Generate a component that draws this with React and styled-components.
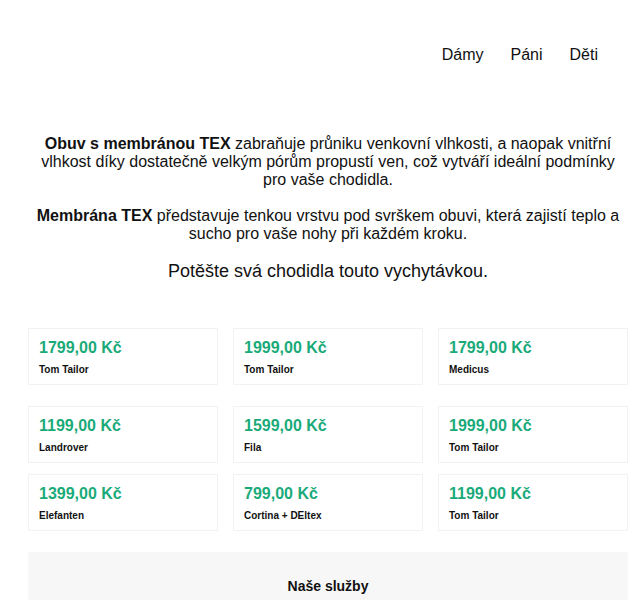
import React from 'react';
import styled, { createGlobalStyle } from 'styled-components';

const GlobalStyle = createGlobalStyle`
  body {
    margin: 0;
    background: #ffffff;
    font-family: "Liberation Sans", Arial, sans-serif;
    color: #111111;
  }
`;

const Page = styled.div`
  width: 600px;
  padding: 0 12px 0 28px;
`;

const Header = styled.header`
  display: flex;
  justify-content: flex-end;
  padding: 46px 30px 0 0;
  height: 90px;
  box-sizing: border-box;
`;

const NavLink = styled.a`
  font-size: 16px;
  color: #111111;
  text-decoration: none;
  margin-left: 27px;
`;

const Intro = styled.section`
  text-align: center;
  padding-top: 45px;
`;

const Paragraph = styled.p`
  font-size: 16px;
  line-height: 18px;
  margin: 0 0 18px;
`;

const Tagline = styled.h2`
  font-size: 18px;
  font-weight: normal;
  line-height: 21px;
  margin: 1px 0 0;
`;

const Grid = styled.div`
  display: grid;
  grid-template-columns: repeat(3, 190px);
  column-gap: 15px;
  row-gap: 11px;
  margin-top: ${(p) => p.$top}px;
`;

const Card = styled.div`
  border: 1px solid #f2f2f2;
  padding: 10px 10px 8px;
  height: 57px;
  box-sizing: border-box;
`;

const Price = styled.div`
  color: #1aaa7a;
  font-weight: bold;
  font-size: 16px;
  line-height: 18px;
  margin-bottom: 7px;
`;

const Brand = styled.div`
  font-weight: bold;
  font-size: 10px;
  line-height: 12px;
  color: #111111;
`;

const Services = styled.section`
  margin-top: 21px;
  background: #f7f7f7;
  height: 60px;
  padding-top: 26px;
  box-sizing: border-box;
  text-align: center;
`;

const ServicesTitle = styled.h3`
  margin: 0;
  font-size: 14px;
  font-weight: bold;
  line-height: 16px;
`;

const featured = [
  { price: '1799,00 Kč', brand: 'Tom Tailor' },
  { price: '1999,00 Kč', brand: 'Tom Tailor' },
  { price: '1799,00 Kč', brand: 'Medicus' },
];

const products = [
  { price: '1199,00 Kč', brand: 'Landrover' },
  { price: '1599,00 Kč', brand: 'Fila' },
  { price: '1999,00 Kč', brand: 'Tom Tailor' },
  { price: '1399,00 Kč', brand: 'Elefanten' },
  { price: '799,00 Kč', brand: 'Cortina + DEltex' },
  { price: '1199,00 Kč', brand: 'Tom Tailor' },
];

const ProductCard = ({ price, brand }) => (
  <Card>
    <Price>{price}</Price>
    <Brand>{brand}</Brand>
  </Card>
);

export default function App() {
  return (
    <>
      <GlobalStyle />
      <Page>
        <Header>
          <NavLink href="#">Dámy</NavLink>
          <NavLink href="#">Páni</NavLink>
          <NavLink href="#">Děti</NavLink>
        </Header>
        <Intro>
          <Paragraph>
            <b>Obuv s membránou TEX</b> zabraňuje průniku venkovní vlhkosti, a naopak vnitřní
            vlhkost díky dostatečně velkým pórům propustí ven, což vytváří ideální podmínky
            pro vaše chodidla.
          </Paragraph>
          <Paragraph>
            <b>Membrána TEX</b> představuje tenkou vrstvu pod svrškem obuvi, která zajistí teplo a
            sucho pro vaše nohy při každém kroku.
          </Paragraph>
          <Tagline>Potěšte svá chodidla touto vychytávkou.</Tagline>
        </Intro>
        <Grid $top={46}>
          {featured.map((p, i) => (
            <ProductCard key={i} {...p} />
          ))}
        </Grid>
        <Grid $top={21}>
          {products.map((p, i) => (
            <ProductCard key={i} {...p} />
          ))}
        </Grid>
        <Services>
          <ServicesTitle>Naše služby</ServicesTitle>
        </Services>
      </Page>
    </>
  );
}
